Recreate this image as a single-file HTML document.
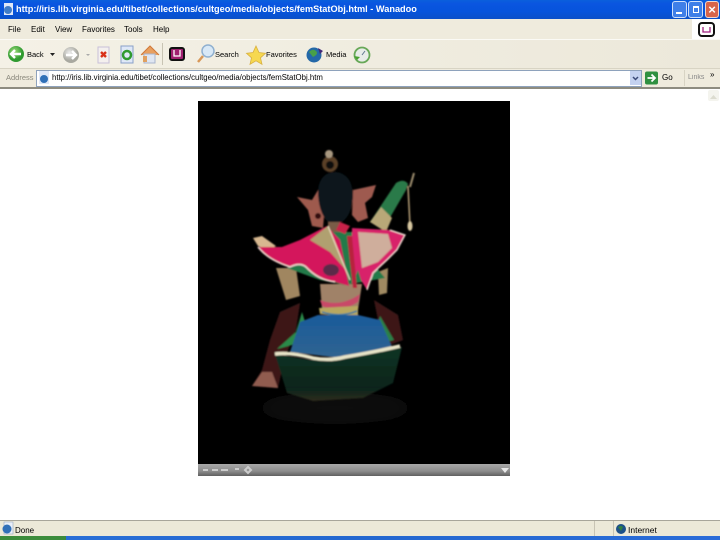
<!DOCTYPE html>
<html><head><meta charset="utf-8"><style>
html,body{margin:0;padding:0;width:720px;height:540px;overflow:hidden;background:#fff;font-family:"Liberation Sans",sans-serif}
.a{position:absolute}
.t{position:absolute;font-size:8px;line-height:11px;color:#000;white-space:nowrap;filter:blur(.35px)}
</style></head><body>
<div class="a" style="left:0;top:0;width:720px;height:19px;background:linear-gradient(#0a5fdc,#0a55e0 20%,#0654dc 60%,#0a50c8)"></div>
<div class="a" style="left:0;top:19px;width:720px;height:20px;background:#efebdd"></div>
<div class="a" style="left:0;top:39px;width:720px;height:1px;background:#fbfaf5"></div>
<div class="a" style="left:0;top:40px;width:720px;height:28px;background:linear-gradient(90deg,#f4f1e6,#ece8da)"></div>
<div class="a" style="left:0;top:68px;width:720px;height:1px;background:#d8d4c4"></div>
<div class="a" style="left:0;top:69px;width:720px;height:18px;background:#efebdd"></div>
<div class="a" style="left:0;top:87px;width:720px;height:2px;background:#8e8c80"></div>
<div class="a" style="left:692px;top:19px;width:28px;height:20px;background:#fff"></div>

<div class="t" style="left:16px;top:4px;font-size:9.2px;font-weight:bold;color:#fff">http://iris.lib.virginia.edu/tibet/collections/cultgeo/media/objects/femStatObj.html - Wanadoo</div>
<svg class="a" style="left:2px;top:2px" width="13" height="15"><rect x="2" y="1" width="9" height="12" fill="#dfe8f8"/><circle cx="6" cy="8" r="4" fill="#3f7cc8"/></svg>
<div class="a" style="left:672px;top:1px;width:13px;height:15px;background:#3f7fe8;border:1px solid #cfe0fa;border-radius:3px"><div class="a" style="left:3px;top:10px;width:6px;height:2px;background:#fff"></div></div>
<div class="a" style="left:688px;top:1px;width:13px;height:15px;background:#3f7fe8;border:1px solid #cfe0fa;border-radius:3px"><div class="a" style="left:4px;top:4px;width:4px;height:4px;border:1px solid #fff;border-top-width:2px"></div></div>
<div class="a" style="left:705px;top:1px;width:12px;height:15px;background:#d8644a;border:1px solid #f0d8d0;border-radius:3px;color:#fff;font-size:13px;line-height:15px;text-align:center;font-weight:bold">×</div>

<div class="t" style="left:8px;top:24px">File</div>
<div class="t" style="left:31px;top:24px">Edit</div>
<div class="t" style="left:55px;top:24px">View</div>
<div class="t" style="left:82px;top:24px">Favorites</div>
<div class="t" style="left:124px;top:24px">Tools</div>
<div class="t" style="left:153px;top:24px">Help</div>
<svg class="a" style="left:696px;top:21px" width="20" height="17"><rect x="3" y="2" width="15" height="13" rx="3" fill="#fff" stroke="#111" stroke-width="2"/><path d="M7 6v5h7V6" fill="none" stroke="#a02080" stroke-width="1.3"/></svg>

<svg class="a" style="left:0;top:40px;filter:blur(.3px)" width="400" height="28">
<defs><radialGradient id="g" cx=".4" cy=".35"><stop offset="0" stop-color="#9fdc7a"/><stop offset="1" stop-color="#2f9a30"/></radialGradient>
<radialGradient id="gr" cx=".4" cy=".35"><stop offset="0" stop-color="#ededed"/><stop offset="1" stop-color="#a8a8a0"/></radialGradient></defs>
<circle cx="16" cy="14" r="8" fill="url(#g)"/><path d="M21 14h-9M15 10l-4 4 4 4" stroke="#fff" stroke-width="2.4" fill="none"/>
<path d="M50 13l2.500 3 2.500-3z" fill="#222"/>
<circle cx="71" cy="15" r="8" fill="url(#gr)"/><path d="M66 15h9M72 11l4 4-4 4" stroke="#fff" stroke-width="2.400" fill="none"/>
<path d="M86 14l2 2 2-2z" fill="#aaa"/>
<path d="M98 7h11v16H98z" fill="#f4f0ee" stroke="#c8c0d8"/><path d="M101 12l5 5M106 12l-5 5" stroke="#d83018" stroke-width="2.400"/>
<path d="M121 6h12v17h-12z" fill="#dfe8f8" stroke="#8aa0c8"/><circle cx="127" cy="15" r="4" fill="none" stroke="#2f9a30" stroke-width="2.500"/>
<path d="M141 15l9-9 9 9" fill="#e8a060" stroke="#d07838"/><path d="M144 14h11v9h-11z" fill="#dfe6f2" stroke="#a8b4cc"/><rect x="143" y="16" width="4" height="6" fill="#e0a060"/>
<rect x="162" y="3" width="1" height="22" fill="#c8c4b4"/>
<rect x="170" y="8" width="14" height="12" rx="2" fill="#a02070" stroke="#111" stroke-width="2"/><path d="M174 10v6h6v-6" fill="none" stroke="#fff" stroke-width="1.300"/>
<circle cx="208" cy="11" r="6" fill="#d8e8f6" stroke="#90b0d0" stroke-width="1.500"/><path d="M203 16l-5 6" stroke="#d89858" stroke-width="2.500"/>
<path d="M256 6l3 6.500 6.500 .8-5 4.500 1.500 6.500-6-3.500-6 3.500 1.500-6.500-5-4.500 6.500-.8z" fill="#f6d850" stroke="#d8b040" stroke-width=".8"/>
<circle cx="314" cy="15" r="7.500" fill="#2468a8"/><path d="M309 12q4-4 7-1t-3 6z" fill="#48a048"/><path d="M318 8l5 3-3 3z" fill="#402878"/>
<circle cx="362" cy="15" r="7.500" fill="#e8ece8" stroke="#68a858" stroke-width="1.800"/><path d="M362 15l3-4" stroke="#607890"/><path d="M354 16l3 4 3-3" fill="#48a030"/>
</svg>
<div class="t" style="left:27px;top:49px;font-size:7.5px">Back</div>
<div class="t" style="left:215px;top:49px;font-size:7.5px">Search</div>
<div class="t" style="left:266px;top:49px;font-size:7.5px">Favorites</div>
<div class="t" style="left:326px;top:49px;font-size:7.5px">Media</div>

<div class="t" style="left:6px;top:72px;font-size:7.5px;color:#8a887c">Address</div>
<div class="a" style="left:36px;top:70px;width:604px;height:15px;background:#fff;border:1px solid #8ea2bc"></div>
<svg class="a" style="left:38px;top:71px" width="12" height="14"><rect x="1" y="0" width="10" height="13" fill="#dfe8f8"/><circle cx="6" cy="8" r="4" fill="#3070b8"/></svg>
<div class="t" style="left:52px;top:72px;font-size:7.8px">http://iris.lib.virginia.edu/tibet/collections/cultgeo/media/objects/femStatObj.htm</div>
<div class="a" style="left:630px;top:71px;width:11px;height:14px;background:#c4d2f0"><svg width="11" height="14"><path d="M3 6l2.500 2.500L8 6" stroke="#3a4a78" stroke-width="1.500" fill="none"/></svg></div>
<svg class="a" style="left:645px;top:71px" width="14" height="14"><rect width="13" height="13" y=".5" rx="2" fill="#2f9040"/><path d="M2.500 7h7M6.500 3.500L10 7l-3.500 3.500" stroke="#fff" stroke-width="1.800" fill="none"/></svg>
<div class="t" style="left:662px;top:72px">Go</div>
<div class="a" style="left:684px;top:70px;width:1px;height:16px;background:#d8d4c4"></div>
<div class="t" style="left:688px;top:72px;font-size:7px;color:#888">Links</div>
<div class="t" style="left:710px;top:69px">»</div>

<div class="a" style="left:708px;top:90px;width:11px;height:11px;background:#f4f4ee;border-radius:2px"><svg width="11" height="11"><path d="M2 7l3.500-4L9 7z" fill="#dcdcd0"/></svg></div>

<svg class="a" style="left:198px;top:101px" width="312" height="375" viewBox="198 101 312 375">
<defs>
<filter id="b" x="-10%" y="-10%" width="120%" height="120%"><feGaussianBlur stdDeviation=".8"/></filter>
<filter id="b2"><feGaussianBlur stdDeviation="10"/></filter>
<linearGradient id="ctl" x1="0" y1="0" x2="0" y2="1"><stop offset="0" stop-color="#a8a8a8"/><stop offset=".6" stop-color="#8c8c8c"/><stop offset="1" stop-color="#606060"/></linearGradient>
<linearGradient id="blue" x1="0" y1="0" x2="0" y2="1"><stop offset="0" stop-color="#1a5a9a"/><stop offset="1" stop-color="#2f6490"/></linearGradient>
<linearGradient id="base" x1="0" y1="0" x2="0" y2="1"><stop offset="0" stop-color="#0e3424"/><stop offset=".75" stop-color="#08241a"/><stop offset="1" stop-color="#2e2c1c"/></linearGradient>
</defs>
<rect x="198" y="101" width="312" height="363" fill="#000"/>
<rect x="198" y="464" width="312" height="12" fill="url(#ctl)"/>
<path d="M203 470h5M212 470h6M221 470h7M235 469h4M248 467l3 3-3 3-3-3z" stroke="#ccc" stroke-width="2" fill="none"/>
<path d="M501 468h8l-4 5z" fill="#e8e8e8"/>
<ellipse cx="335" cy="408" rx="80" ry="16" fill="#090909" filter="url(#b2)"/>
<g filter="url(#b)">
<path d="M410 187L414 173" stroke="#a09070" stroke-width="2"/>
<path d="M408 186L410 226" stroke="#b8a078" stroke-width="1.500"/>
<ellipse cx="410" cy="226" rx="2.500" ry="5" fill="#d8c8a0"/>
<path d="M370 222L396 183Q404 178 408 184L406 190L384 228z" fill="#2c7a48"/>
<path d="M370 222L381 207L392 218L386 232z" fill="#b8a878"/>
<path d="M297 197L312 200L318 190L325 205L323 228L312 226L308 210z" fill="#9e5a4e"/>
<circle cx="318" cy="216" r="3" fill="#301010"/>
<path d="M353 190L376 185L372 197L365 203L368 218L358 222L352 215z" fill="#9e5a50"/>
<circle cx="330" cy="164" r="8" fill="#5a4028"/><circle cx="330" cy="165" r="4" fill="#100c08"/>
<circle cx="329" cy="154" r="4" fill="#a89880"/>
<path d="M318 190Q320 172 336 172Q352 174 353 195Q352 215 342 222H328Q318 212 318 190z" fill="#08121c"/>
<path d="M328 222h12v12h-12z" fill="#7a5c46"/>
<path d="M276 268L296 268L300 296L286 300z" fill="#a08660"/>
<path d="M378 272L388 268L387 293L379 295z" fill="#a08a62"/>
<path d="M253 238L262 236L276 246L268 250L258 246z" fill="#d8b890"/>
<path d="M300 303L280 312L270 340L262 370L252 386L278 388L284 360L296 330z" fill="#3c1618"/>
<path d="M252 386L278 388L272 372L262 372z" fill="#905c50"/>
<path d="M374 300L398 315L403 340L390 345L378 320z" fill="#3c1518"/>
<path d="M302 312L296 332L277 349L292 345L306 325z" fill="#2a8a48"/>
<path d="M380 316L394 340L386 342L378 324z" fill="#2a8048"/>
<path d="M320 284L362 284L358 310L322 310z" fill="#a08268"/>
<path d="M320 300Q340 308 360 294L358 302Q340 314 322 306z" fill="#c84868"/>
<path d="M319 308L358 306L358 316L340 316L320 314z" fill="#b8a860"/>
<path d="M322 312Q340 318 357 311" stroke="#3878a0" stroke-width="1.500" fill="none"/>
<path d="M318 315L358 315L380 320L392 347L340 358L290 352L300 322z" fill="url(#blue)"/>
<path d="M275 354L287 393L313 401L363 398L393 383L402 347L378 352L340 358L310 360z" fill="url(#base)"/>
<path d="M275 354Q290 352 313 358Q330 361 345 357Q375 352 400 346" stroke="#e8e4c8" stroke-width="3.500" fill="none"/>
<path d="M287 268L320 280L345 285L385 278L372 262L360 232H325z" fill="#207a48"/>
<path d="M258 247Q268 260 290 267Q300 262 306 267Q318 280 335 282L349 286L340 240L327 226L300 240L282 247Z" fill="#d4145c"/>
<path d="M258 247Q268 260 290 267Q300 262 306 267Q318 280 335 282" stroke="#f0d8d0" stroke-width="1.500" fill="none"/>
<path d="M310 240L328 226L346 270L330 252z" fill="#b0a070"/>
<path d="M328 226L350 280" stroke="#e8e0c0" stroke-width="1.200"/>
<ellipse cx="331" cy="270" rx="8" ry="6" fill="#5a2a4a"/>
<path d="M352 228L390 230L405 235L397 250L387 260L373 273L367 290L361 280L358 270L352 284z" fill="#d8226a"/>
<path d="M358 232L388 234L392 248L378 262L362 268z" fill="#cfae9c"/>
<path d="M390 230L405 235L397 250L387 260L373 273L367 290" stroke="#f4e0d8" stroke-width="1.300" fill="none"/>
<path d="M347 236L352 236L357 288H353z" fill="#b8203c"/>
<path d="M340 222L350 226L345 234L336 230z" fill="#c8204a"/>
</g>
</svg>

<div class="a" style="left:0;top:520px;width:720px;height:1px;background:#a8a69a"></div>
<div class="a" style="left:0;top:521px;width:720px;height:15px;background:#ece9d8"></div>
<svg class="a" style="left:1px;top:521px" width="13" height="15"><rect x="3" y="1" width="9" height="12" fill="#e8eef8" stroke="#98a8c0" stroke-width=".6"/><circle cx="6" cy="8" r="4.500" fill="#3070b8"/></svg>
<div class="t" style="left:15px;top:525px">Done</div>
<div class="a" style="left:594px;top:521px;width:1px;height:15px;background:#c8c4b4"></div>
<div class="a" style="left:613px;top:521px;width:1px;height:15px;background:#c8c4b4"></div>
<svg class="a" style="left:615px;top:523px" width="12" height="12"><circle cx="6" cy="6" r="5" fill="#1c5088"/><path d="M3 4q3-2 5 0l-2 4z" fill="#308040"/></svg>
<div class="t" style="left:628px;top:525px;font-size:8.500px">Internet</div>
<div class="a" style="left:0;top:536px;width:720px;height:4px;background:linear-gradient(90deg,#2a70d8,#2468d0 50%,#2a6cd8)"></div>
<div class="a" style="left:0;top:536px;width:66px;height:4px;background:#3c8c3c"></div>
</body></html>
